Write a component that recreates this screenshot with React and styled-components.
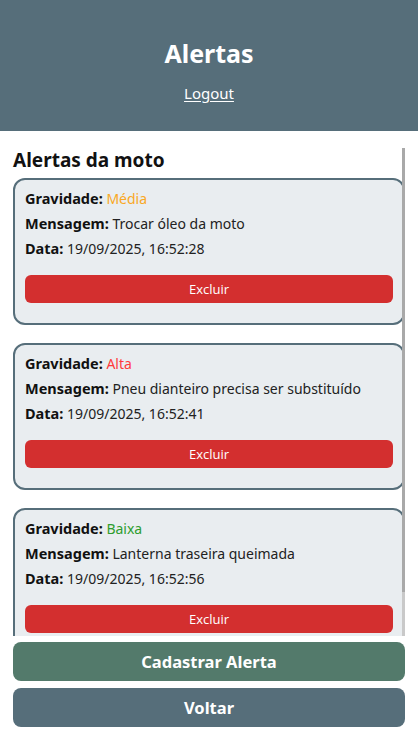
import React from "react";
import styled, { createGlobalStyle } from "styled-components";

const Global = createGlobalStyle`
  html, body { margin: 0; padding: 0; background: #ffffff; }
  body { font-family: "Noto Sans", "Open Sans", sans-serif; color: #111; }
  * { box-sizing: border-box; }
`;

const Page = styled.div`
  height: 747px;
  display: flex;
  flex-direction: column;
  padding-bottom: 20px;
`;

const Header = styled.header`
  height: 131px;
  flex: none;
  background: #566e7a;
  color: #fff;
  display: flex;
  flex-direction: column;
  align-items: center;
  padding-top: 36px;
`;

const Title = styled.h1`
  margin: 0;
  font-size: 25px;
  line-height: 34px;
  font-weight: 700;
`;

const Logout = styled.a`
  margin-top: 14px;
  color: #fff;
  font-size: 15px;
  line-height: 18px;
  text-decoration: underline;
  text-underline-offset: 2px;
  cursor: pointer;
`;

const ListWrap = styled.div`
  position: relative;
  flex: 1;
  min-height: 0;
  margin: 17px 0 6px;
`;

const List = styled.div`
  height: 100%;
  overflow-y: auto;
  padding: 0 13px;
  scrollbar-width: none;
  &::-webkit-scrollbar { display: none; }
`;

const Track = styled.div`
  position: absolute;
  top: 0;
  bottom: 0;
  right: 13px;
  width: 3px;
  background: #c9c9c9;
`;

const Thumb = styled.div`
  position: absolute;
  top: 0;
  left: 0;
  width: 3px;
  background: #a9a9a9;
`;

const SectionTitle = styled.h2`
  margin: 0 0 5px;
  font-size: 19px;
  line-height: 25px;
  font-weight: 700;
`;

const Card = styled.div`
  background: #e9edf0;
  border: 2px solid #566e7a;
  border-radius: 12px;
  padding: 10px;
  margin-bottom: 18px;
`;

const Line = styled.p`
  margin: 0 0 8px;
  font-size: 14px;
  line-height: 17px;
  color: #222;
  white-space: nowrap;
`;

const Label = styled.strong`
  font-size: 14.5px;
  font-weight: 700;
  color: #111;
`;

const Severity = styled.span`
  color: ${(p) => p.$color};
`;

const DeleteButton = styled.button`
  display: block;
  width: 100%;
  height: 28px;
  margin: 18px 0 10px;
  border: none;
  border-radius: 6px;
  background: #d32f2f;
  color: #fff;
  font-family: "Open Sans", sans-serif;
  font-size: 13px;
  cursor: pointer;
`;

const ActionButton = styled.button`
  flex: none;
  display: block;
  margin: 0 13px;
  height: 39px;
  border: none;
  border-radius: 8px;
  background: ${(p) => p.$bg};
  color: #fff;
  font-family: "Noto Sans", sans-serif;
  font-weight: 700;
  font-size: 16.5px;
  cursor: pointer;
  & + & { margin-top: 7px; }
`;

const severityColor = {
  "Média": "#f9a825",
  Alta: "#ff3b3b",
  Baixa: "#2e9d2e",
};

const alerts = [
  { g: "Média", m: "Trocar óleo da moto", d: "19/09/2025, 16:52:28" },
  { g: "Alta", m: "Pneu dianteiro precisa ser substituído", d: "19/09/2025, 16:52:41" },
  { g: "Baixa", m: "Lanterna traseira queimada", d: "19/09/2025, 16:52:56" },
];

export default function App() {
  return (
    <>
      <Global />
      <Page>
        <Header>
          <Title>Alertas</Title>
          <Logout>Logout</Logout>
        </Header>
        <ListWrap>
          <List>
            <SectionTitle>Alertas da moto</SectionTitle>
            {alerts.map((a) => (
              <Card key={a.d}>
                <Line>
                  <Label>Gravidade:</Label> <Severity $color={severityColor[a.g]}>{a.g}</Severity>
                </Line>
                <Line>
                  <Label>Mensagem:</Label> {a.m}
                </Line>
                <Line>
                  <Label>Data:</Label> {a.d}
                </Line>
                <DeleteButton>Excluir</DeleteButton>
              </Card>
            ))}
          </List>
          <Track>
            <Thumb style={{ height: "91%" }} />
          </Track>
        </ListWrap>
        <ActionButton $bg="#537a6b">Cadastrar Alerta</ActionButton>
        <ActionButton $bg="#566e7a">Voltar</ActionButton>
      </Page>
    </>
  );
}
